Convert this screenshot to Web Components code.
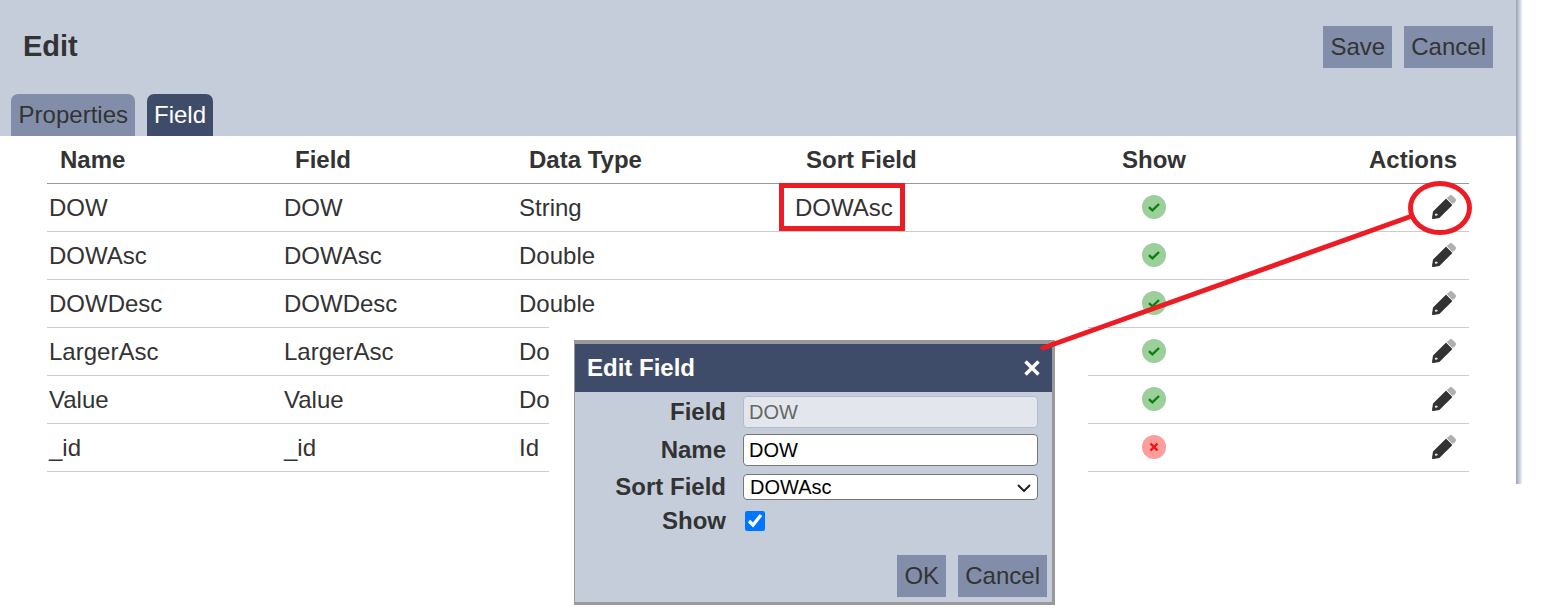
<!DOCTYPE html>
<html>
<head>
<meta charset="utf-8">
<title>Edit</title>
<style>
    html, body { margin: 0; background: #fff; }
    body { font: 24px "Liberation Sans", Arial, sans-serif; color: #333; }
    x-row span { display: block; }
</style>
</head>
<body>
<x-app>
    <x-header slot="header" title="Edit">
        <x-button slot="actions" style="min-width:69px">Save</x-button>
        <x-button slot="actions">Cancel</x-button>
        <x-tab slot="tabs" style="padding:0 7px 0 7.6px">Properties</x-tab>
        <x-tab slot="tabs" active>Field</x-tab>
    </x-header>
    <x-table>
        <x-row head><span>Name</span><span>Field</span><span>Data Type</span><span>Sort Field</span><span>Show</span><span>Actions</span></x-row>
        <x-row><span>DOW</span><span>DOW</span><span>String</span><span>DOWAsc</span><x-status></x-status><x-pencil></x-pencil></x-row>
        <x-row><span>DOWAsc</span><span>DOWAsc</span><span>Double</span><span></span><x-status></x-status><x-pencil></x-pencil></x-row>
        <x-row><span>DOWDesc</span><span>DOWDesc</span><span>Double</span><span></span><x-status></x-status><x-pencil></x-pencil></x-row>
        <x-row><span>LargerAsc</span><span>LargerAsc</span><span>Double</span><span></span><x-status></x-status><x-pencil></x-pencil></x-row>
        <x-row><span>Value</span><span>Value</span><span>Double</span><span></span><x-status></x-status><x-pencil></x-pencil></x-row>
        <x-row><span>_id</span><span>_id</span><span>Id</span><span></span><x-status off></x-status><x-pencil></x-pencil></x-row>
    </x-table>
</x-app>
<x-dialog heading="Edit Field">
    <x-form-row label="Field" style="--h:36px"><x-field kind="disabled" value="DOW"></x-field></x-form-row>
    <x-form-row label="Name" style="--h:40px"><x-field value="DOW"></x-field></x-form-row>
    <x-form-row label="Sort Field" style="--h:34px"><x-field kind="select" value="DOWAsc"></x-field></x-form-row>
    <x-form-row label="Show" style="--h:34px"><x-field kind="check"></x-field></x-form-row>
    <x-button slot="buttons" style="min-width:49px">OK</x-button>
    <x-button slot="buttons">Cancel</x-button>
</x-dialog>
<x-marks></x-marks>

<script>
// small helper so every element below is just a template + a shadow root
function tpl(html) {
    const t = document.createElement('template');
    t.innerHTML = html;
    return t;
}

function simple(name, t) {
    customElements.define(name, class extends HTMLElement {
        constructor() {
            super();
            this.attachShadow({ mode: 'open' }).appendChild(t.content.cloneNode(true));
        }
    });
}

simple('x-app', tpl(`
    <style>
        :host { display: flex; width: 1522px; height: 484px; }
        .main { width: 1516px; flex: none; }
        .edge { flex: 1; background: linear-gradient(90deg, #98a1b3, #c3cbd9 50%, #eceff4); }
    </style>
    <div class="main"><slot name="header"></slot><slot></slot></div>
    <div class="edge"></div>
`));

class XHeader extends HTMLElement {
    constructor() {
        super();
        this.attachShadow({ mode: 'open' }).innerHTML = `
            <style>
                :host { display: flex; flex-direction: column; height: 136px; background: #c5cddb; box-sizing: border-box; padding: 26px 23px 0 11px; }
                .top { display: flex; justify-content: space-between; align-items: flex-start; height: 68px; }
                h1 { margin: 2px 0 0 12px; font-size: 29px; line-height: 36px; font-weight: bold; color: #333; }
                .actions { display: flex; gap: 12px; }
                .tabs { display: flex; gap: 12px; }
            </style>
            <div class="top">
                <h1>${this.getAttribute('title')}</h1>
                <div class="actions"><slot name="actions"></slot></div>
            </div>
            <div class="tabs"><slot name="tabs"></slot></div>
        `;
    }
}
customElements.define('x-header', XHeader);

simple('x-button', tpl(`
    <style>
        :host { display: block; box-sizing: border-box; height: 42px; padding: 0 7px; background: #828ea9; color: #333; font-size: 24px; line-height: 42px; text-align: center; }
    </style>
    <slot></slot>
`));

simple('x-tab', tpl(`
    <style>
        :host { display: block; box-sizing: border-box; height: 42px; padding: 0 7px; border-radius: 7px 7px 0 0; background: #828ea9; color: #333; font-size: 24px; line-height: 42px; }
        :host([active]) { background: #3f4c69; color: #fff; }
    </style>
    <slot></slot>
`));

simple('x-table', tpl(`
    <style>
        :host { display: block; padding: 0 47px; }
    </style>
    <slot></slot>
`));

simple('x-row', tpl(`
    <style>
        :host { display: grid; grid-template-columns: 235px 235px 276px 247px 228px 201px; align-items: center; height: 48px; box-sizing: border-box; border-bottom: 1px solid #ccc; color: #333; font-size: 24px; }
        ::slotted(*) { padding-left: 2px; }
        ::slotted(x-status) { justify-self: center; padding: 0; margin-bottom: 2px; }
        ::slotted(x-pencil) { justify-self: end; padding: 0 13px 0 0; margin-bottom: 1px; }
        :host([head]) { height: 48px; border-bottom-color: #999; font-weight: bold; }
        :host([head]) ::slotted(*) { padding-left: 13px; }
        :host([head]) ::slotted(:nth-child(3)) { padding-left: 12px; }
        :host([head]) ::slotted(:nth-child(5)) { padding: 0; text-align: center; }
        :host([head]) ::slotted(:nth-child(6)) { padding: 0 12px 0 0; text-align: right; }
    </style>
    <slot></slot>
`));

simple('x-status', tpl(`
    <style>
        :host { display: block; width: 24px; height: 24px; }
        svg { display: block; }
        .on, .no { display: none; }
        :host(:not([off])) .on { display: inline; }
        :host([off]) .no { display: inline; }
    </style>
    <svg width="24" height="24" viewBox="0 0 24 24">
        <g class="on">
            <circle cx="12" cy="12" r="12" fill="#9ccf9c"/>
            <path d="M7 12.2l3.4 3.2L17 9" fill="none" stroke="#0a820a" stroke-width="2.4"/>
        </g>
        <g class="no">
            <circle cx="12" cy="12" r="12" fill="#ff9c9c"/>
            <path d="M8.5 8.5l7 7M15.5 8.5l-7 7" fill="none" stroke="#f01414" stroke-width="2.4"/>
        </g>
    </svg>
`));

simple('x-pencil', tpl(`
    <style>
        :host { display: block; height: 24px; }
        svg { display: block; }
    </style>
    <svg width="24" height="24" viewBox="0 0 512 512">
        <path fill="#b0b0b0" d="M497.9 142.1l-46.1 46.1c-4.7 4.7-12.3 4.7-17 0l-111-111c-4.7-4.7-4.7-12.3 0-17l46.1-46.1c18.7-18.7 49.1-18.7 67.9 0l60.1 60.1c18.8 18.7 18.8 49.1 0 67.9z"/>
        <path fill="#333" d="M290.3 85.7L21.6 354.4.4 483.9c-2.9 16.4 11.4 30.6 27.8 27.8l129.5-21.3 268.7-268.7c4.7-4.7 4.7-12.3 0-17l-119-119c-4.8-4.7-12.4-4.7-17.1 0z"/>
        <path fill="#fff" d="M84 390l48 38-58 12-14-14z"/>
    </svg>
`));

class XDialog extends HTMLElement {
    constructor() {
        super();
        this.attachShadow({ mode: 'open' }).innerHTML = `
            <style>
                /* sits over the table, the white margin hides what is behind it */
                :host { position: absolute; left: 549px; top: 327px; width: 539px; height: 283px; background: #fff; box-sizing: border-box; padding: 13px 33px 5px 25px; overflow: hidden; }
                .box { box-sizing: border-box; width: 481px; height: 265px; display: flex; flex-direction: column; background: #c5cddb; border-style: solid; border-color: #999; border-width: 4px 3px 3px 1px; }
                .title { display: flex; justify-content: space-between; align-items: center; flex: none; height: 48px; padding: 0 12px; background: #3f4c69; color: #fff; font-weight: bold; font-size: 24px; }
                .form { padding-top: 2px; flex: 1; }
                .buttons { display: flex; justify-content: flex-end; gap: 12px; padding: 0 5px 5px 0; }
                svg { display: block; }
            </style>
            <div class="box">
                <div class="title">
                    <span>${this.getAttribute('heading')}</span>
                    <svg width="16" height="16" viewBox="0 0 16 16"><path d="M1.5 1.5l13 13M14.5 1.5l-13 13" stroke="#fff" stroke-width="3.4" fill="none"/></svg>
                </div>
                <div class="form"><slot></slot></div>
                <div class="buttons"><slot name="buttons"></slot></div>
            </div>
        `;
    }
}
customElements.define('x-dialog', XDialog);

class XFormRow extends HTMLElement {
    constructor() {
        super();
        this.attachShadow({ mode: 'open' }).innerHTML = `
            <style>
                :host { display: grid; grid-template-columns: 151px 295px; column-gap: 17px; align-items: center; height: var(--h, 36px); }
                label { text-align: right; font-weight: bold; color: #333; font-size: 24px; }
            </style>
            <label>${this.getAttribute('label')}</label>
            <slot></slot>
        `;
    }
}
customElements.define('x-form-row', XFormRow);

class XField extends HTMLElement {
    constructor() {
        super();
        const kind = this.getAttribute('kind');
        const value = this.getAttribute('value') || '';
        let ctl = `<input type="text" value="${value}">`;
        if (kind === 'disabled') ctl = `<input type="text" disabled value="${value}">`;
        if (kind === 'select') ctl = `<select><option>${value}</option><option>DOW</option><option>DOWDesc</option></select>
            <svg class="chev" width="14" height="8" viewBox="0 0 14 8"><path d="M1 1l6 6 6-6" fill="none" stroke="#222" stroke-width="2"/></svg>`;
        if (kind === 'check') ctl = `<input type="checkbox" checked>`;
        this.attachShadow({ mode: 'open' }).innerHTML = `
            <style>
                :host { display: block; position: relative; }
                input, select { display: block; box-sizing: border-box; width: 295px; margin: 0; font: 20px "Liberation Sans", Arial, sans-serif; color: #000; background: #fff; border: 1px solid #767676; border-radius: 4px; }
                input[type=text] { height: 32px; padding: 0 5px; }
                input:disabled { background: #e3e7ed; border-color: #b4bbc9; color: #666; }
                select { height: 26px; padding: 0 6px; appearance: none; }
                .chev { position: absolute; right: 7px; top: 10px; pointer-events: none; }
                input[type=checkbox] { width: 20px; height: 20px; margin-left: 2px; accent-color: #0075ff; }
            </style>
            ${ctl}
        `;
    }
}
customElements.define('x-field', XField);

simple('x-marks', tpl(`
    <style>
        /* red hand drawn annotations on top of the whole screenshot */
        :host { position: absolute; left: 0; top: 0; width: 1560px; height: 610px; pointer-events: none; }
        svg { display: block; }
    </style>
    <svg width="1560" height="610" fill="none" stroke="#ed1c24" stroke-width="5">
        <rect x="781.5" y="185.5" width="121" height="43"/>
        <ellipse cx="1440" cy="208" rx="29.5" ry="24.5"/>
        <path d="M1043 348L1412 216" stroke-linecap="round"/>
    </svg>
`));
</script>
</body>
</html>
